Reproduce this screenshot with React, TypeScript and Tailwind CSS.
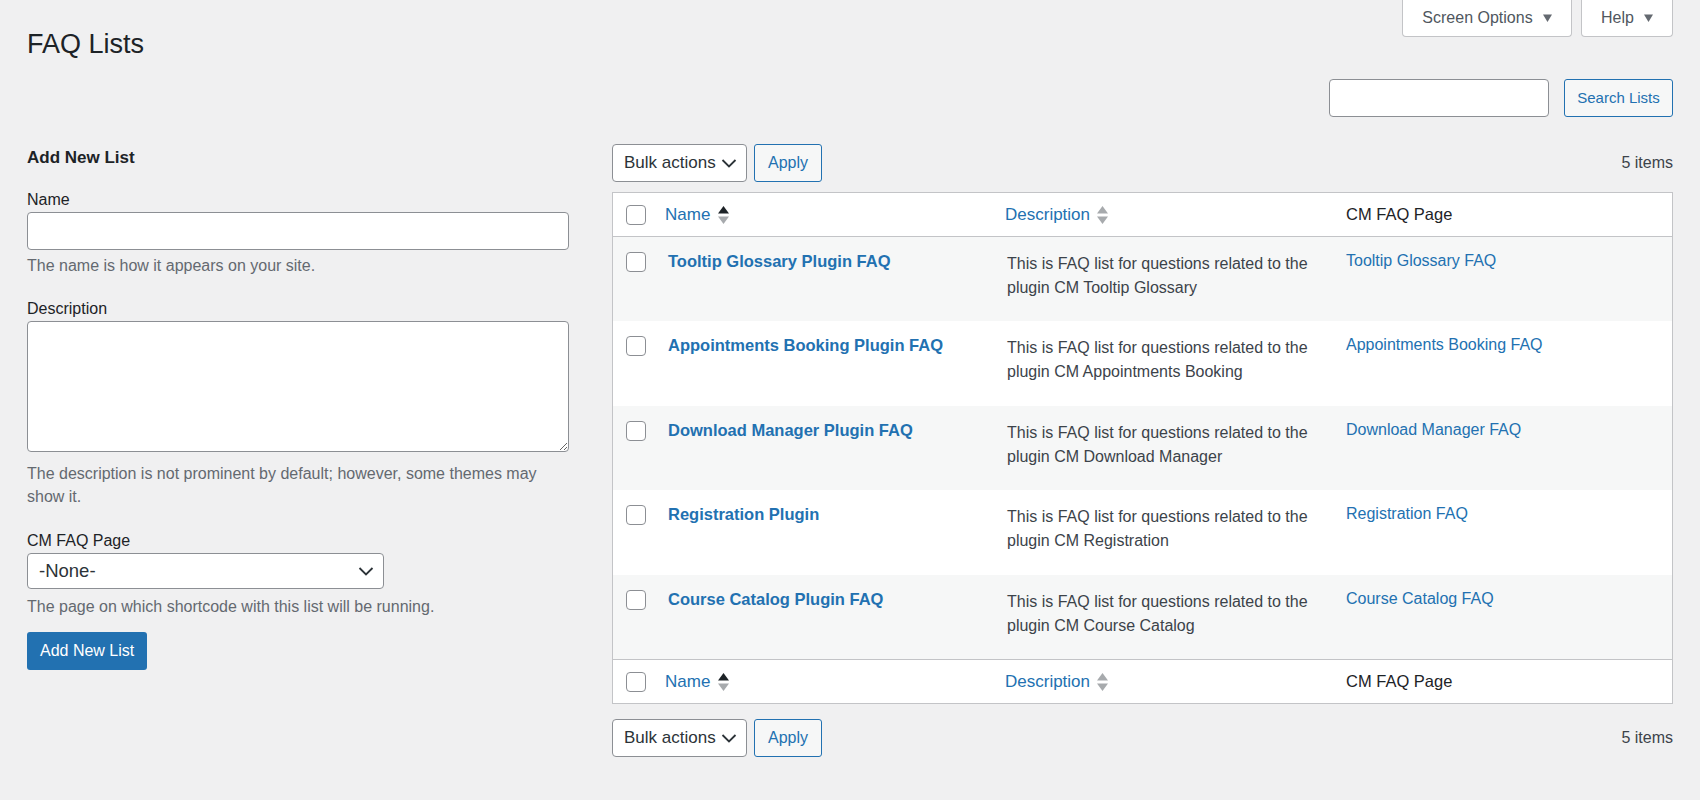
import type { ReactNode } from 'react';

type FaqList = { name: string; plugin: string; page: string };

const LISTS: FaqList[] = [
  { name: 'Tooltip Glossary Plugin FAQ', plugin: 'Tooltip Glossary', page: 'Tooltip Glossary FAQ' },
  { name: 'Appointments Booking Plugin FAQ', plugin: 'Appointments Booking', page: 'Appointments Booking FAQ' },
  { name: 'Download Manager Plugin FAQ', plugin: 'Download Manager', page: 'Download Manager FAQ' },
  { name: 'Registration Plugin', plugin: 'Registration', page: 'Registration FAQ' },
  { name: 'Course Catalog Plugin FAQ', plugin: 'Course Catalog', page: 'Course Catalog FAQ' },
];

function Caret() {
  return (
    <svg width="9" height="8" viewBox="0 0 9 8" className="shrink-0">
      <path d="M0 0.5h9L4.5 8z" fill="#646970" />
    </svg>
  );
}

function Chevron() {
  return (
    <svg width="20" height="20" viewBox="0 0 20 20">
      <polyline points="3.5,7 10,13.5 16.5,7" fill="none" stroke="#2c3338" strokeWidth="1.8" />
    </svg>
  );
}

function SortArrows({ active = false }: { active?: boolean }) {
  return (
    <svg width="11" height="18" viewBox="0 0 11 18" className="shrink-0">
      <path d="M0 7.5L5.5 0 11 7.5z" fill={active ? '#1d2327' : '#a7aaad'} />
      <path d="M0 10.5h11L5.5 18z" fill="#a7aaad" />
    </svg>
  );
}

function Checkbox() {
  return (
    <input
      type="checkbox"
      className="m-0 block h-[20px] w-[20px] appearance-none rounded-[4px] border border-[#8c8f94] bg-white"
    />
  );
}

function Select({ value, width, height, text }: { value: string; width: string; height: string; text: string }) {
  return (
    <div className={`relative ${width} ${height}`}>
      <select
        className={`h-full w-full appearance-none rounded-[4px] border border-[#8c8f94] bg-white pl-[11px] text-[#2c3338] ${text}`}
        defaultValue={value}
      >
        <option>{value}</option>
      </select>
      <span className="pointer-events-none absolute top-1/2 right-[8px] -translate-y-1/2">
        <Chevron />
      </span>
    </div>
  );
}

function TableNav() {
  return (
    <div className="flex h-[38px] items-center">
      <Select value="Bulk actions" width="w-[135px]" height="h-[38px]" text="text-[17px]" />
      <button
        type="button"
        className="ml-[7px] h-[38px] w-[68px] rounded-[3px] border border-[#2271b1] bg-[#f6f7f7] text-[16px] text-[#2271b1]"
      >
        Apply
      </button>
      <span className="ml-auto text-[16px] text-[#3c434a]">5 items</span>
    </div>
  );
}

// header / footer row of the list table (44px incl. its 1px rule)
function HeadRow({ top }: { top?: boolean }) {
  return (
    <div
      className={`grid h-[44px] grid-cols-[40px_340px_341px_1fr] items-center border-[#c3c4c7] ${
        top ? 'border-b' : 'border-t'
      }`}
    >
      <div className="pl-[13px]">
        <Checkbox />
      </div>
      <div className="flex items-center gap-[8px] pl-[12px] text-[17px] text-[#2271b1]">
        Name <SortArrows active />
      </div>
      <div className="flex items-center gap-[7px] pl-[12px] text-[17px] text-[#2271b1]">
        Description <SortArrows />
      </div>
      <div className="pl-[12px] text-[16.5px] text-[#1d2327]">CM FAQ Page</div>
    </div>
  );
}

function Field({ label, children, help, gap }: { label: string; children: ReactNode; help: string; gap: string }) {
  return (
    <>
      <label className="block text-[16px] leading-[24px] text-[#1d2327]">{label}</label>
      {children}
      <p className={`${gap} text-[16px] leading-[23.5px] text-[#646970]`}>{help}</p>
    </>
  );
}

export default function App() {
  return (
    <div className="min-h-screen bg-[#f0f0f1] px-[27px] font-['Liberation_Sans',Arial,sans-serif] text-[#3c434a]">
      <div className="flex items-start justify-between">
        <h1 className="mt-[26px] text-[27px] leading-[36px] text-[#1d2327]">FAQ Lists</h1>
        <div className="flex gap-[9px]">
          <button
            type="button"
            className="flex h-[37px] w-[170px] items-center justify-center gap-[10px] rounded-b-[4px] border border-t-0 border-[#c3c4c7] bg-white text-[16px] text-[#50575e]"
          >
            Screen Options <Caret />
          </button>
          <button
            type="button"
            className="flex h-[37px] w-[92px] items-center justify-center gap-[10px] rounded-b-[4px] border border-t-0 border-[#c3c4c7] bg-white text-[16px] text-[#50575e]"
          >
            Help <Caret />
          </button>
        </div>
      </div>

      <div className="mt-[17px] flex justify-end gap-[15px]">
        <input className="h-[38px] w-[220px] rounded-[4px] border border-[#8c8f94] bg-white" />
        <button
          type="button"
          className="h-[38px] w-[109px] rounded-[3px] border border-[#2271b1] bg-[#f6f7f7] text-[15px] text-[#2271b1]"
        >
          Search Lists
        </button>
      </div>

      <div className="mt-[27px] flex items-start">
        {/* left: add form */}
        <div className="w-[542px] shrink-0">
          <h2 className="mt-[2px] text-[17px] leading-[24px] font-bold text-[#1d2327]">Add New List</h2>
          <div className="mt-[18px]">
            <Field label="Name" help="The name is how it appears on your site." gap="mt-[4px]">
              <input className="block h-[38px] w-full rounded-[4px] border border-[#8c8f94] bg-white" />
            </Field>
          </div>
          <div className="mt-[19px]">
            <Field
              label="Description"
              help="The description is not prominent by default; however, some themes may show it."
              gap="mt-[10px]"
            >
              <textarea className="block h-[131px] w-full rounded-[4px] border border-[#8c8f94] bg-white" />
            </Field>
          </div>
          <div className="mt-[20px]">
            <Field label="CM FAQ Page" help="The page on which shortcode with this list will be running." gap="mt-[6px]">
              <Select value="-None-" width="w-[357px]" height="h-[36px]" text="text-[18.5px]" />
            </Field>
          </div>
          <button
            type="button"
            className="mt-[14px] h-[38px] rounded-[3px] bg-[#2271b1] px-[13px] text-[16px] text-white"
          >
            Add New List
          </button>
        </div>

        {/* right: list table */}
        <div className="ml-[43px] min-w-0 flex-1">
          <TableNav />
          <div className="mt-[10px] border border-[#c3c4c7] bg-white">
            <HeadRow top />
            {LISTS.map((l, i) => (
              <div
                key={l.name}
                className={`grid grid-cols-[40px_340px_341px_1fr] ${
                  i % 2 === 0 ? 'h-[84px] bg-[#f6f7f7]' : 'h-[85px] bg-white'
                }`}
              >
                <div className="pt-[15px] pl-[13px]">
                  <Checkbox />
                </div>
                <div className="pt-[12px] pl-[15px] text-[16.5px] leading-[24px] font-bold text-[#2271b1]">
                  {l.name}
                </div>
                <div className="pt-[15px] pr-[12px] pl-[14px] text-[16px] leading-[24px] text-[#3c434a]">
                  {`This is FAQ list for questions related to the plugin CM ${l.plugin}`}
                </div>
                <div className="pt-[12px] pl-[12px] text-[16px] leading-[24px] text-[#2271b1]">{l.page}</div>
              </div>
            ))}
            <HeadRow />
          </div>
          <div className="mt-[15px]">
            <TableNav />
          </div>
        </div>
      </div>
    </div>
  );
}
